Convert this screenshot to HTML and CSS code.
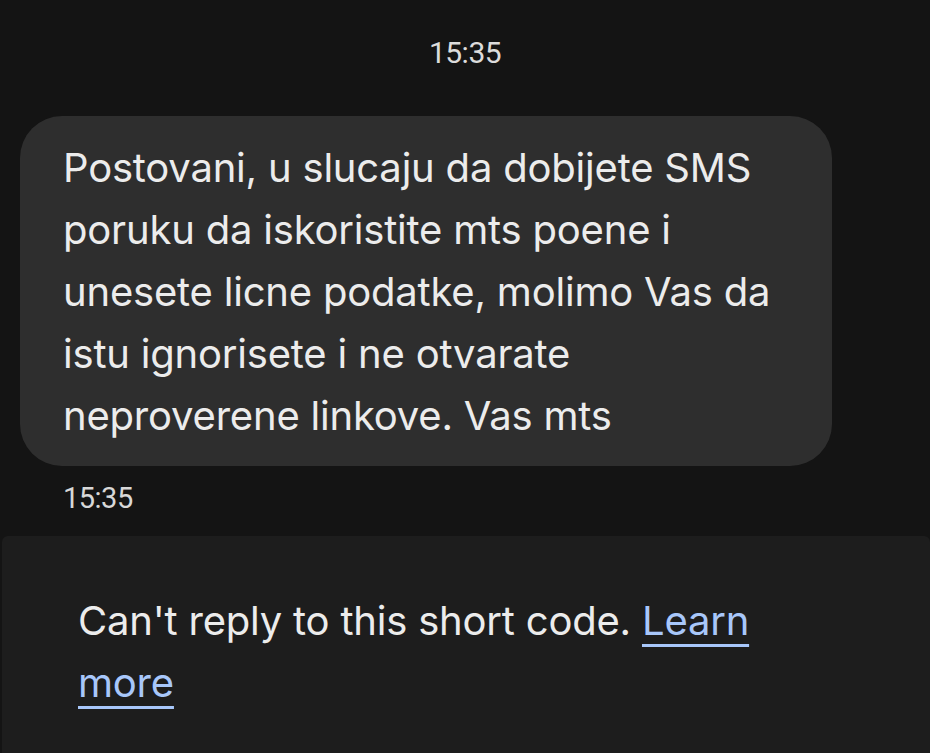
FILE: index.html
```html
<!DOCTYPE html>
<html lang="en">
<head>
  <meta charset="UTF-8">
  <meta name="viewport" content="width=device-width, initial-scale=1.0">
  <title>Messages</title>
  <link rel="stylesheet" href="styles.css">
</head>
<body>

  <div id="thread">
    <div class="day-time">15:35</div>

    <div class="message">
      <div class="bubble">
        Postovani, u slucaju da dobijete SMS poruku da iskoristite mts poene i unesete licne podatke, molimo Vas da istu ignorisete i ne otvarate neproverene linkove. Vas mts
      </div>
      <div class="msg-time">15:35</div>
    </div>
  </div>

  <div id="reply-panel">
    <p class="notice">Can't reply to this short code. <a href="#" class="learn">Learn more</a></p>
  </div>

</body>
</html>
```

FILE: styles.css
```css
body {
  margin: 0;
  height: 753px;
  overflow: hidden;
  background-color: #141414;
  font-family: 'Inter', 'Roboto', sans-serif;
  color: #e6e6e6;
  display: flex;
  flex-direction: column;
}

#thread {
  padding: 0 20px;
}

.day-time {
  text-align: center;
  font-family: 'Roboto', sans-serif;
  font-size: 30px;
  line-height: 36px;
  padding-top: 35px;
  color: #dcdcdc;
  letter-spacing: -0.5px;
}

.message {
  margin-top: 45px;
}

.bubble {
  width: 812px;
  box-sizing: border-box;
  background-color: #2e2e2e;
  border-radius: 42px;
  padding: 21px 40px 19px 43px;
  font-size: 40px;
  line-height: 62px;
  letter-spacing: -0.2px;
  color: #ececec;
}

.msg-time {
  font-family: 'Roboto', sans-serif;
  font-size: 29px;
  line-height: 36px;
  padding: 14px 0 0 43px;
  color: #d8d8d8;
  letter-spacing: -0.5px;
}

#reply-panel {
  margin-top: 20px;
  margin-left: 2px;
  flex: 1;
  background-color: #1d1d1d;
  border-radius: 6px 6px 0 0;
  padding: 54px 150px 0 76px;
}

.notice {
  margin: 0;
  font-size: 40px;
  line-height: 62px;
  letter-spacing: -0.2px;
  color: #ececec;
}

.learn {
  color: #a8c7fa;
  text-decoration: underline;
  text-decoration-thickness: 3px;
  text-underline-offset: 9px;
}
```
